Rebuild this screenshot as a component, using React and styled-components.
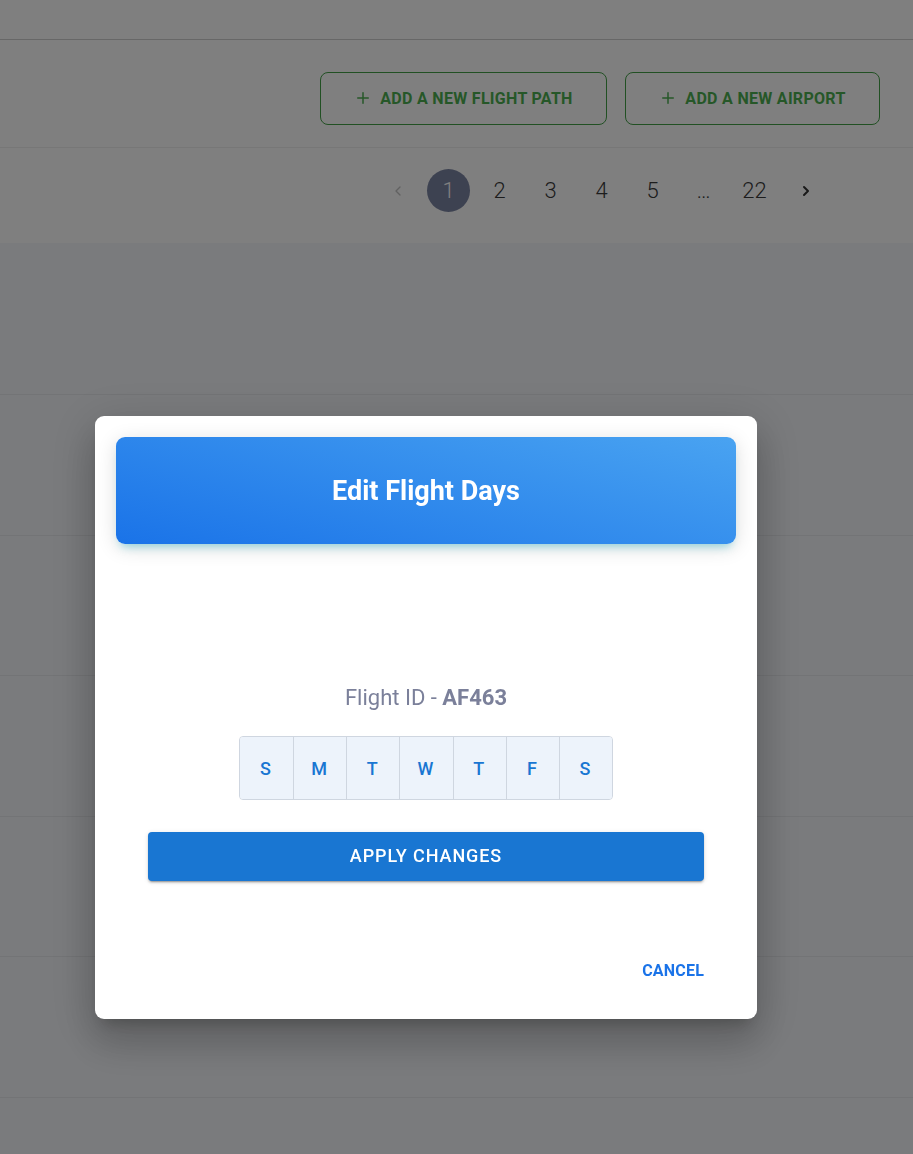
import React from "react";
import styled, { createGlobalStyle } from "styled-components";
import { ChevronLeft, ChevronRight, Plus } from "lucide-react";

const GlobalStyle = createGlobalStyle`
  * {
    box-sizing: border-box;
  }
  body {
    margin: 0;
    background: #ffffff;
    font-family: Roboto, "Liberation Sans", Arial, sans-serif;
    overflow: hidden;
  }
`;

const Page = styled.div`
  height: 1154px;
  overflow: hidden;
  background: #f4f6fa;
`;

const TopBar = styled.div`
  height: 40px;
  background: #ffffff;
  border-bottom: 1px solid #cecece;
`;

const ActionBar = styled.div`
  height: 108px;
  background: #ffffff;
  border-bottom: 1px solid #efefef;
  display: flex;
  align-items: center;
  justify-content: flex-end;
  gap: 18px;
  padding: 9px 33px 0 0;
`;

const OutlineButton = styled.button`
  height: 53px;
  width: ${(p) => p.width}px;
  display: flex;
  align-items: center;
  justify-content: center;
  gap: 8px;
  background: transparent;
  border: 1px solid #43a047;
  border-radius: 8px;
  color: #4caf50;
  font-family: Roboto, "Liberation Sans", sans-serif;
  font-weight: 700;
  font-size: 16px;
  letter-spacing: 0.3px;
  text-transform: uppercase;
`;

const PaginationBar = styled.div`
  height: 95px;
  background: #ffffff;
  display: flex;
  align-items: center;
  justify-content: flex-end;
  padding: 0 86px 10px 0;
`;

const Pager = styled.div`
  display: flex;
  align-items: center;
  gap: 8px;
`;

const PageItem = styled.div`
  width: 43px;
  height: 43px;
  border-radius: 50%;
  display: flex;
  align-items: center;
  justify-content: center;
  font-family: Roboto, "Liberation Sans", sans-serif;
  font-weight: 300;
  font-size: 22px;
  color: ${(p) => (p.$active ? "#ffffff" : "#3a3a3a")};
  background: ${(p) => (p.$active ? "#7b84a2" : "transparent")};
`;

const Arrow = styled.div`
  width: 43px;
  height: 43px;
  display: flex;
  align-items: center;
  justify-content: center;
  color: ${(p) => (p.$disabled ? "#c2c2c2" : "#333333")};
`;

const TableHead = styled.div`
  height: 152px;
  border-bottom: 1px solid #e6e8ec;
`;

const TableRow = styled.div`
  height: 140.6px;
  border-bottom: 1px solid #e6e8ec;
`;

const Overlay = styled.div`
  position: fixed;
  inset: 0;
  background: rgba(0, 0, 0, 0.5);
  display: flex;
  align-items: flex-start;
  justify-content: flex-start;
  padding: 416px 0 0 95px;
`;

const Dialog = styled.div`
  width: 662px;
  height: 603px;
  background: #ffffff;
  border-radius: 9px;
  padding: 21px 21px 0;
  display: flex;
  flex-direction: column;
  box-shadow: 0 11px 15px -7px rgba(0, 0, 0, 0.2),
    0 24px 38px 3px rgba(0, 0, 0, 0.14), 0 9px 46px 8px rgba(0, 0, 0, 0.12);
`;

const Header = styled.div`
  height: 107px;
  border-radius: 9px;
  background: linear-gradient(195deg, #49a3f1, #1a73e8);
  box-shadow: 0 4px 20px 0 rgba(0, 0, 0, 0.14),
    0 7px 10px -5px rgba(0, 187, 212, 0.4);
  display: flex;
  align-items: center;
  justify-content: center;
`;

const Title = styled.h2`
  margin: 0;
  color: #ffffff;
  font-family: Roboto, "Liberation Sans", sans-serif;
  font-weight: 700;
  font-size: 27px;
`;

const Body = styled.div`
  padding: 0 32px;
  display: flex;
  flex-direction: column;
  align-items: center;
`;

const FlightId = styled.p`
  margin: 141px 0 0;
  height: 26px;
  line-height: 26px;
  color: #7b809a;
  font-size: 22px;
  font-weight: 400;

  b {
    font-weight: 700;
  }
`;

const DayGroup = styled.div`
  margin-top: 25px;
  display: flex;
  border: 1px solid #cfd6e0;
  border-radius: 4px;
  overflow: hidden;
`;

const Day = styled.button`
  width: 53.2px;
  height: 62px;
  border: none;
  border-left: ${(p) => (p.$first ? "none" : "1px solid #cfd6e0")};
  background: #edf3fb;
  color: #1976d2;
  font-family: Roboto, "Liberation Sans", sans-serif;
  font-weight: 500;
  font-size: 18px;
  padding: 0 2px 0 0;
`;

const ApplyButton = styled.button`
  margin-top: 32px;
  width: 556px;
  height: 49px;
  border: none;
  border-radius: 4px;
  background: #1976d2;
  color: #ffffff;
  font-family: Roboto, "Liberation Sans", sans-serif;
  font-weight: 500;
  font-size: 18px;
  letter-spacing: 0.9px;
  text-transform: uppercase;
  padding: 0 0 3px;
  box-shadow: 0 3px 1px -2px rgba(0, 0, 0, 0.2), 0 2px 2px 0 rgba(0, 0, 0, 0.14),
    0 1px 5px 0 rgba(0, 0, 0, 0.12);
`;

const Actions = styled.div`
  margin-top: 71px;
  display: flex;
  justify-content: flex-end;
  padding-right: 32px;
`;

const TextButton = styled.button`
  height: 36px;
  border: none;
  background: transparent;
  padding: 0;
  color: #1a73e8;
  font-family: Roboto, "Liberation Sans", sans-serif;
  font-weight: 700;
  font-size: 16px;
  letter-spacing: 0.2px;
  text-transform: uppercase;
`;

const pages = ["1", "2", "3", "4", "5", "...", "22"];
const days = ["S", "M", "T", "W", "T", "F", "S"];

export default function App() {
  return (
    <>
      <GlobalStyle />
      <Page>
        <TopBar />
        <ActionBar>
          <OutlineButton width={287}>
            <Plus size={18} strokeWidth={2} />
            Add a new flight path
          </OutlineButton>
          <OutlineButton width={255}>
            <Plus size={18} strokeWidth={2} />
            Add a new airport
          </OutlineButton>
        </ActionBar>
        <PaginationBar>
          <Pager>
            <Arrow $disabled>
              <ChevronLeft size={16} strokeWidth={2} />
            </Arrow>
            {pages.map((p) => (
              <PageItem key={p} $active={p === "1"}>
                {p === "..." ? "…" : p}
              </PageItem>
            ))}
            <Arrow>
              <ChevronRight size={16} strokeWidth={3} />
            </Arrow>
          </Pager>
        </PaginationBar>
        <TableHead />
        {[0, 1, 2, 3, 4, 5].map((i) => (
          <TableRow key={i} />
        ))}
      </Page>
      <Overlay>
        <Dialog>
          <Header>
            <Title>Edit Flight Days</Title>
          </Header>
          <Body>
            <FlightId>
              Flight ID - <b>AF463</b>
            </FlightId>
            <DayGroup>
              {days.map((d, i) => (
                <Day key={i} $first={i === 0}>
                  {d}
                </Day>
              ))}
            </DayGroup>
            <ApplyButton>Apply changes</ApplyButton>
          </Body>
          <Actions>
            <TextButton>Cancel</TextButton>
          </Actions>
        </Dialog>
      </Overlay>
    </>
  );
}
